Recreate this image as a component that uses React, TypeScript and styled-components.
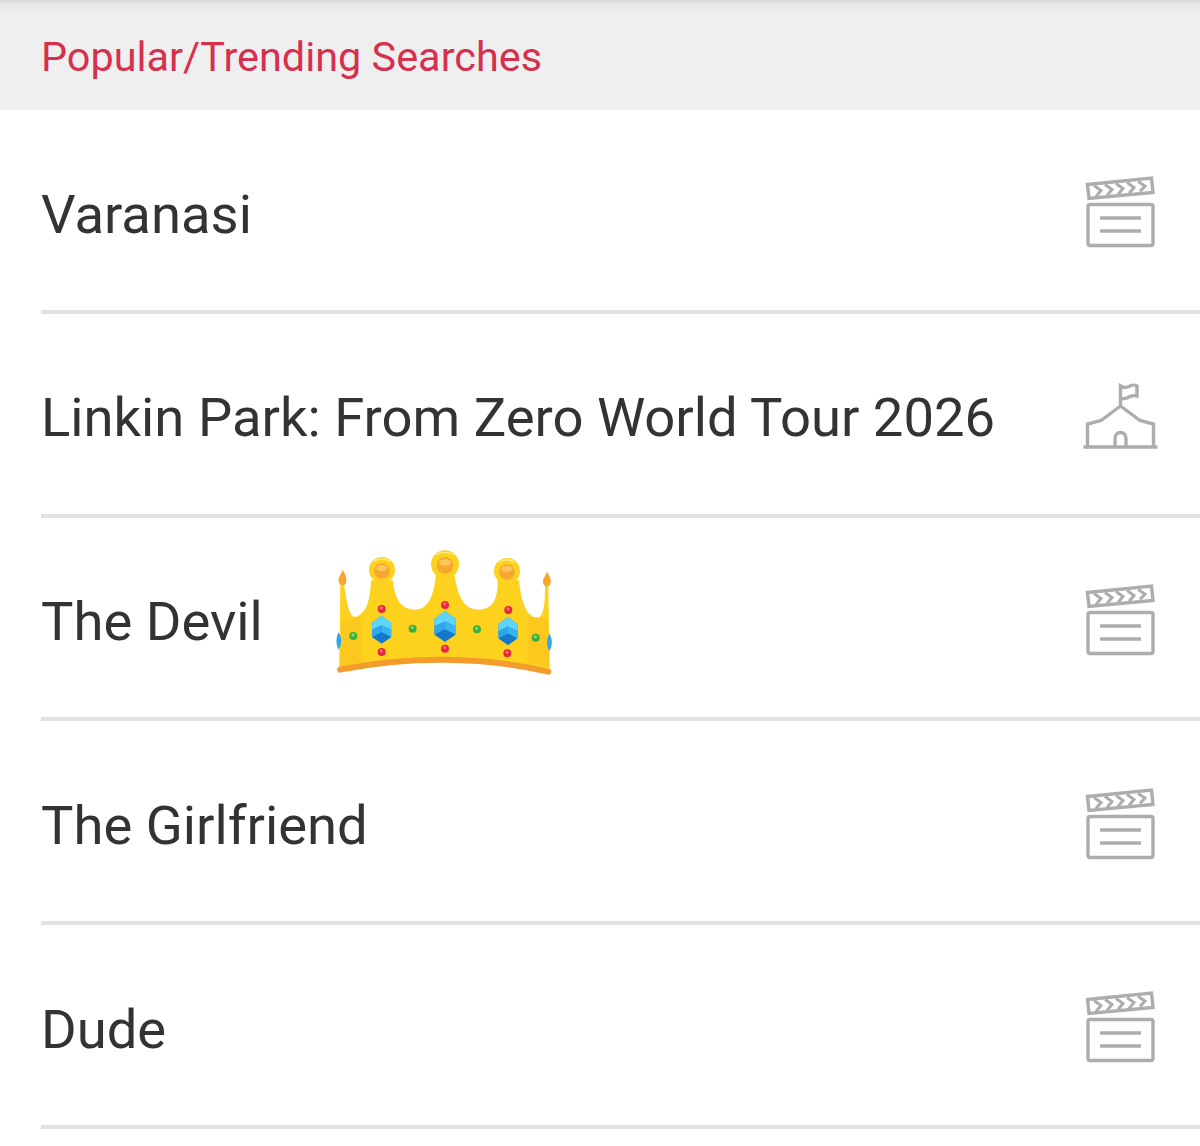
import React from "react";
import styled, { createGlobalStyle } from "styled-components";

const Global = createGlobalStyle`
  html, body { margin: 0; padding: 0; background: #fff; }
  body { font-family: Roboto, "Noto Sans", sans-serif; }
`;

const Page = styled.div`
  width: 1200px;
  height: 1146px;
  overflow: hidden;
  background: #fff;
`;

const Header = styled.header`
  height: 110px;
  box-sizing: border-box;
  padding: 5px 0 0 41px;
  display: flex;
  align-items: center;
  background: linear-gradient(#d9d9d9 0, #e6e6e6 4px, #efefef 16px);
`;

const HeaderTitle = styled.h2`
  margin: 0;
  font-size: 41.4px;
  font-weight: 400;
  color: #d6304f;
  line-height: 1;
`;

const List = styled.ul`
  list-style: none;
  margin: 0;
  padding: 0 0 0 41px;
`;

const Row = styled.li`
  height: 203.75px;
  box-sizing: border-box;
  border-bottom: 4px solid #e2e2e2;
  display: flex;
  align-items: center;
  justify-content: space-between;
  padding-top: 3px;
`;

const Label = styled.div`
  display: flex;
  align-items: center;
`;

const Name = styled.span`
  font-size: 54.4px;
  color: #333;
  line-height: 1;
  padding-top: 7px;
`;

const CrownSvg = styled.svg`
  width: 250px;
  height: 145px;
  margin: 0 0 10px 58px;
  flex: none;
`;

const IconSvg = styled.svg`
  width: 120px;
  height: 100px;
  margin-right: 20px;
  flex: none;
  fill: none;
  stroke: #adadad;
  stroke-width: 3.4;
`;

const Clapper = () => (
  <IconSvg viewBox="0 0 120 100">
    <path d="M27.5 23.5 L91.5 17 L93 31.5 L29 37.5 Z" />
    <path
      strokeWidth="3"
      d="M34 24.5 L41 29.5 L36 35.5 M45 23.5 L52 28.5 L47 34.5 M56 22.5 L63 27.5 L58 33.5 M67 21.5 L74 26.5 L69 32.5 M78 20.5 L85 25 L80 30.5"
    />
    <rect x="28" y="43.5" width="65" height="41" rx="2" />
    <path d="M40 57 H81 M40 70 H81" />
  </IconSvg>
);

const Tent = () => (
  <IconSvg viewBox="0 0 120 100">
    <g transform="translate(0 6.5)">
      <path d="M60.5 34.5 V14.5 C64 17 67 16 70 14.5 C73 13 74 13 77 14.5 V24.5 C73 23.5 71 24 68 26 C65 27.5 63 28 60.5 26.5" />
      <path d="M27.5 75 V52.5 L41 49 L60.5 34.5 L80 49 L93.5 52.5 V75" />
      <path d="M55 75 V67 C55 59 66 59 66 67 V75" />
      <path d="M23.5 75.5 H97.5" />
    </g>
  </IconSvg>
);

const Gem = ({ x, y, s = 1 }: { x: number; y: number; s?: number }) => (
  <g transform={`translate(${x} ${y}) scale(${s})`}>
    <path d="M0 -44 L30 -22 V22 L0 44 L-30 22 V-22 Z" fill="#1e88d8" />
    <path d="M0 -44 L30 -22 V0 L0 -14 L-30 0 V-22 Z" fill="#5fd4fd" />
    <path d="M-30 0 L0 -14 V8 L-30 24 Z" fill="#2ea6ea" />
    <path d="M30 0 L0 -14 V8 L30 24 Z" fill="#38b4f0" />
    <path d="M0 8 L30 24 L0 44 L-30 24 Z" fill="#1478cc" />
  </g>
);

const Ball = ({ x, y, r }: { x: number; y: number; r: number }) => (
  <g>
    <circle cx={x} cy={y} r={r} fill="#fdd21f" />
    <circle cx={x} cy={y + 3} r={r * 0.6} fill="#f7a62e" />
    <ellipse cx={x} cy={y - 6} rx={r * 0.42} ry={r * 0.24} fill="#fbc75a" />
    <path
      d={`M${x - r * 0.62} ${y - r * 0.68} Q${x} ${y - r * 1.02} ${x + r * 0.62} ${y - r * 0.68}`}
      fill="none"
      stroke="#fee98a"
      strokeWidth="4"
    />
  </g>
);

const Dot = ({ x, y, c, h }: { x: number; y: number; c: string; h: string }) => (
  <g>
    <circle cx={x} cy={y} r="12" fill={c} />
    <circle cx={x - 1} cy={y - 3} r="5" fill={h} />
  </g>
);

const Crown = () => (
  <CrownSvg viewBox="0 0 750 435">
    <path
      d="M55 382 L58 130 L69 130 C80 200 85 228 105 228 C140 215 148 170 150 118 L215 118 C222 170 235 205 283 206 C325 205 338 160 345 100 L400 100 C410 160 425 205 472 206 C520 205 530 170 530 118 L594 118 C600 170 610 225 650 232 C668 225 672 190 672 135 L682 135 L686 385 C480 340 260 340 55 382 Z"
      fill="#fdd21f"
    />
    <path d="M62 240 L120 228 V366 L55 378 Z" fill="#fbc91e" />
    <path d="M620 225 L680 235 L686 378 L620 364 Z" fill="#fbc91e" />
    <Ball x={183} y={87} r={39} />
    <Ball x={372} y={70} r={42} />
    <Ball x={558} y={90} r={39} />
    <path d="M65 86 C74 100 78 112 76 122 C74 136 56 136 53 122 C51 110 60 100 65 86 Z" fill="#f7a62e" />
    <path d="M678 92 C687 106 691 116 689 126 C687 140 669 140 666 126 C664 114 673 106 678 92 Z" fill="#f7a62e" />
    <path d="M53 274 C63 290 63 310 53 326 C44 310 44 290 53 274 Z" fill="#2ea6ea" />
    <path d="M685 278 C695 294 695 314 685 330 C676 314 676 294 685 278 Z" fill="#2ea6ea" />
    <Gem x={182} y={266} s={0.95} />
    <Gem x={372} y={256} s={1.05} />
    <Gem x={561} y={270} s={0.95} />
    <Dot x={182} y={204} c="#e8263c" h="#f56a78" />
    <Dot x={372} y={192} c="#e8263c" h="#f56a78" />
    <Dot x={562} y={207} c="#e8263c" h="#f56a78" />
    <Dot x={182} y={333} c="#e8263c" h="#f56a78" />
    <Dot x={372} y={323} c="#e8263c" h="#f56a78" />
    <Dot x={559} y={337} c="#e8263c" h="#f56a78" />
    <Dot x={97} y={285} c="#3cae3c" h="#7bd86a" />
    <Dot x={275} y={263} c="#3cae3c" h="#7bd86a" />
    <Dot x={468} y={265} c="#3cae3c" h="#7bd86a" />
    <Dot x={644} y={290} c="#3cae3c" h="#7bd86a" />
    <path
      d="M57 386 C260 345 480 345 682 392"
      fill="none"
      stroke="#f39c2c"
      strokeWidth="18"
      strokeLinecap="round"
    />
  </CrownSvg>
);

const rows = [
  { name: "Varanasi", icon: <Clapper /> },
  { name: "Linkin Park: From Zero World Tour 2026", icon: <Tent /> },
  { name: "The Devil", icon: <Clapper />, crown: true },
  { name: "The Girlfriend", icon: <Clapper /> },
  { name: "Dude", icon: <Clapper /> },
];

export default function App() {
  return (
    <Page>
      <Global />
      <Header>
        <HeaderTitle>Popular/Trending Searches</HeaderTitle>
      </Header>
      <List>
        {rows.map((r) => (
          <Row key={r.name}>
            <Label>
              <Name>{r.name}</Name>
              {r.crown && <Crown />}
            </Label>
            {r.icon}
          </Row>
        ))}
      </List>
    </Page>
  );
}
